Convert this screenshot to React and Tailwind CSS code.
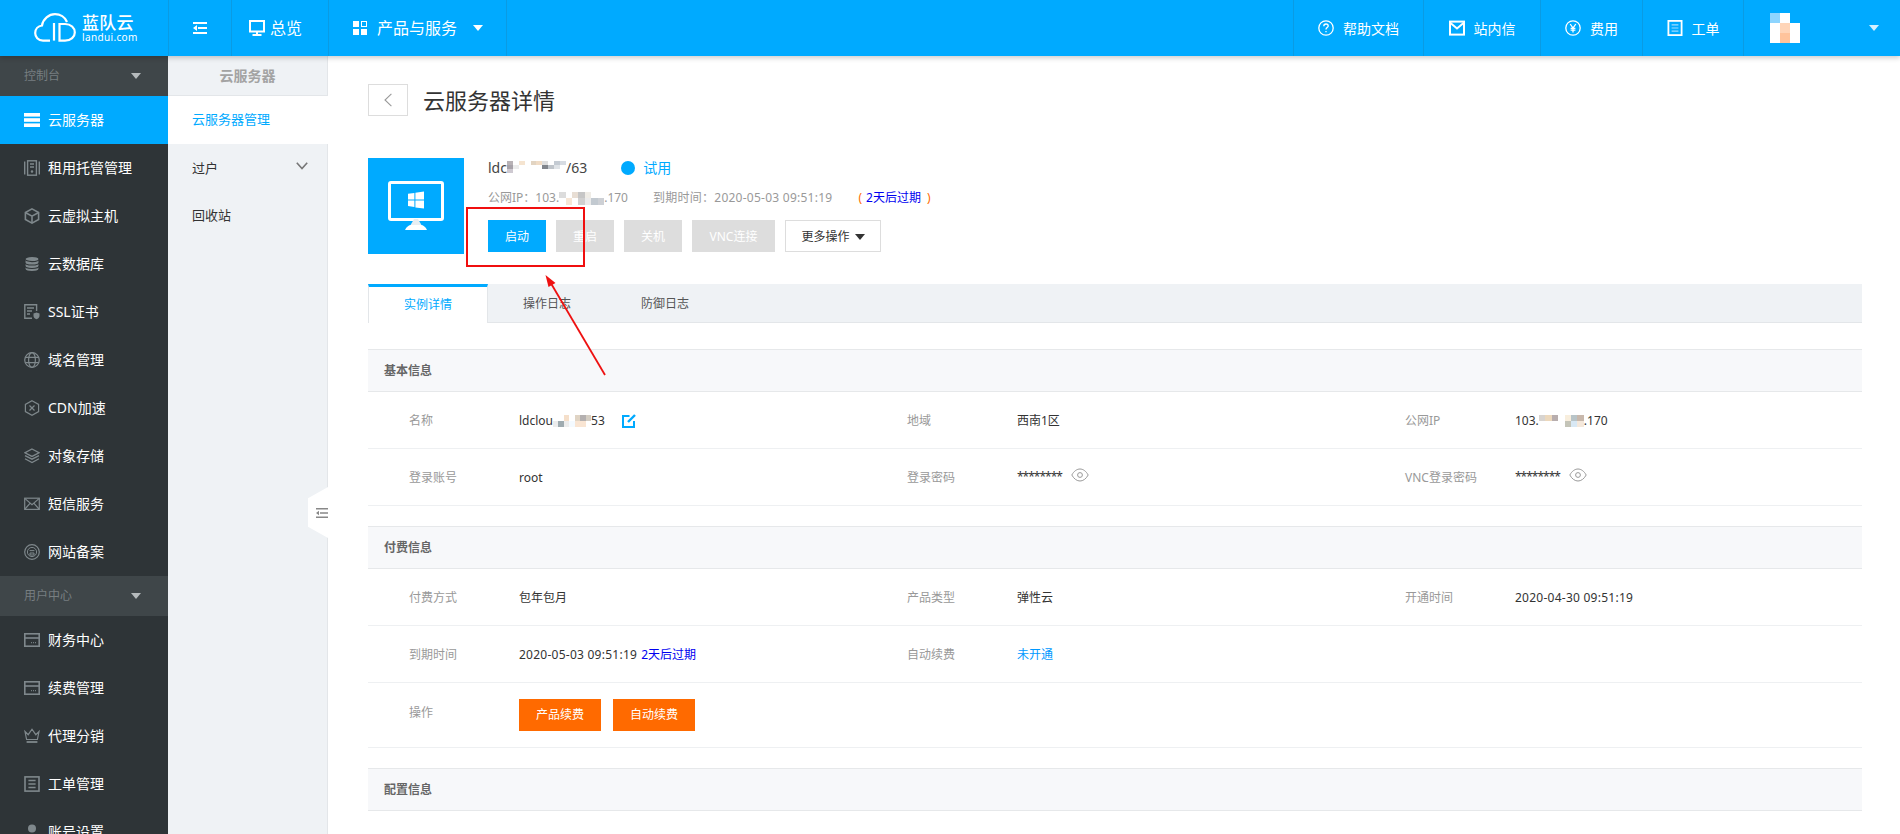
import React from "react";

const Tri = ({ cls = "border-t-white" }) => (
  <span className={`inline-block w-0 h-0 border-x-[5px] border-x-transparent border-t-[6px] ${cls}`} />
);

const I = ({ children, className = "", w = 16, h = 16, fill = "none", stroke = "#7f888c", sw = 1.4 }) => (
  <svg viewBox={`0 0 ${w} ${h}`} width={w} height={h} fill={fill} stroke={stroke} strokeWidth={sw} className={`shrink-0 ${className}`}>
    {children}
  </svg>
);

const icons = {
  server: (
    <I fill="#fff" stroke="none">
      <rect x="0" y="1" width="16" height="3.6" />
      <rect x="0" y="6.2" width="16" height="3.6" />
      <rect x="0" y="11.4" width="16" height="3.6" />
    </I>
  ),
  rack: (
    <I>
      <path d="M.7 1.5v13M15.3 1.5v13" />
      <rect x="3.6" y=".8" width="8.8" height="14.4" />
      <path d="M6 4h4M6 7h4" />
      <circle cx="8" cy="11.5" r=".6" />
    </I>
  ),
  cube: (
    <I sw="1.6">
      <path d="M8 .9l6.6 3.6v7L8 15.1 1.4 11.5v-7z" />
      <path d="M1.8 4.8L8 8.2l6.2-3.4M8 8.2v6.6" />
    </I>
  ),
  db: (
    <I fill="#7f888c" stroke="#2e3437" sw="1.1">
      <path d="M1 10.4v2.4C1 14.4 4.1 15.6 8 15.6s7-1.2 7-2.8v-2.4z" />
      <path d="M1 6.6v3.2c0 1.5 3.1 2.7 7 2.7s7-1.2 7-2.7V6.6z" />
      <path d="M1 3v3.4C1 7.9 4.1 9 8 9s7-1.1 7-2.6V3z" />
      <ellipse cx="8" cy="3" rx="7" ry="2.6" />
    </I>
  ),
  ssl: (
    <I>
      <path d="M8 14.3H.8V.8h11.8V7" />
      <path d="M3 4h7M3 7h5M3 10h3" />
      <path d="M12.5 8.4l3 1v2.6c0 1.5-1.4 2.6-3 3.2-1.6-.6-3-1.7-3-3.2V9.4z" fill="#7f888c" stroke="none" />
    </I>
  ),
  globe: (
    <I sw="1.2">
      <circle cx="8" cy="8" r="7.3" />
      <ellipse cx="8" cy="8" rx="3.4" ry="7.3" />
      <path d="M1.2 5.4h13.6M1.2 10.6h13.6" />
    </I>
  ),
  cdn: (
    <I sw="1.2">
      <path d="M8 .8l6.6 3.6v7.2L8 15.2 1.4 11.6V4.4z" />
      <path d="M5.5 5.5l5 5M10.5 5.5l-5 5" />
      <circle cx="8" cy="8" r="1.1" fill="#7f888c" stroke="none" />
    </I>
  ),
  layers: (
    <I sw="1.3">
      <path d="M8 1l7 3.8-7 3.6-7-3.6z" />
      <path d="M1 7.6l7 3.6 7-3.6M1 10.8l7 3.8 7-3.8" />
    </I>
  ),
  mail: (
    <I sw="1.2">
      <rect x=".7" y="2.2" width="14.6" height="11.2" />
      <path d="M1 2.6l7 6 7-6M1 13l5-5.6M15 13l-5-5.6" />
    </I>
  ),
  bei: (
    <I sw="1.2">
      <circle cx="8" cy="8" r="7.3" />
      <circle cx="8" cy="8" r="4.6" strokeWidth="1" />
      <path d="M5.6 6.6h4.8M6 9h4M6 9v2h4V9" strokeWidth="1" />
    </I>
  ),
  card: (
    <I sw="1.6">
      <rect x=".8" y="1.8" width="14.4" height="12.4" />
      <path d="M1 6h14" />
      <path d="M7 10.6h.9M9 10.6h.9M11 10.6h.9" strokeWidth="1.4" />
    </I>
  ),
  crown: (
    <I sw="1.2">
      <path d="M1 3.5l3.2 3.2L8 1.2l3.8 5.5L15 3.5l-1.6 8H2.6z" />
      <path d="M2.6 14h10.8" strokeWidth="1.8" />
    </I>
  ),
  ticket: (
    <I sw="1.6">
      <rect x="1" y=".9" width="14" height="14.2" />
      <path d="M4.4 4.5h7.2M4.4 8h7.2M4.4 11.5h7.2" strokeWidth="1.3" />
    </I>
  ),
  user: (
    <I fill="#7f888c" stroke="none">
      <circle cx="8" cy="4.5" r="4" />
      <path d="M1 16c0-3.6 3-6 7-6s7 2.4 7 6z" />
    </I>
  ),
};

const sideGroups = [
  { head: "控制台", items: [
    ["云服务器", "server", true], ["租用托管管理", "rack"], ["云虚拟主机", "cube"], ["云数据库", "db"], ["SSL证书", "ssl"],
    ["域名管理", "globe"], ["CDN加速", "cdn"], ["对象存储", "layers"], ["短信服务", "mail"], ["网站备案", "bei"],
  ]},
  { head: "用户中心", items: [
    ["财务中心", "card"], ["续费管理", "card"], ["代理分销", "crown"], ["工单管理", "ticket"], ["账号设置", "user"],
  ]},
];

const Sidebar = () => (
  <aside className="w-[168px] shrink-0 bg-[#2e3437] text-[14px]">
    {sideGroups.map((g) => (
      <div key={g.head}>
        <div className="h-10 bg-[#3f4649] flex items-center justify-between pl-6 pr-[27px] text-[12px] text-[#777e81]">
          <span>{g.head}</span>
          <Tri cls="border-t-[#b5babc]" />
        </div>
        {g.items.map(([label, ic, active]) => (
          <div key={label} className={`h-12 flex items-center pl-6 gap-2 ${active ? "bg-[#00aaff] text-white" : "text-white"}`}>
            {icons[ic]}
            <span className="pb-[2px]">{label}</span>
          </div>
        ))}
      </div>
    ))}
  </aside>
);

const SubNav = () => (
  <nav className="relative w-[160px] shrink-0 bg-[#eff2f5] border-r border-[#e3e6e9] text-[13px]">
    <div className="h-10 flex items-center justify-center text-[14px] font-bold text-[#a3a3a3] border-b border-[#e3e6e9]">云服务器</div>
    <div className="h-12 flex items-center pl-6 bg-white text-[#00aaff] -mr-px">云服务器管理</div>
    <div className="h-12 flex items-center justify-between pl-6 pr-[19px] text-[#333]">
      <span className="pt-[2px]">过户</span>
      <svg viewBox="0 0 12 8" width="12" height="8" fill="none" stroke="#777" strokeWidth="1.6" className="-mt-1"><path d="M.8.8L6 6.6 11.2.8" /></svg>
    </div>
    <div className="h-12 flex items-center pl-6 text-[#333]">回收站</div>
    <div className="absolute -right-px top-[431px] w-5 h-[51px] bg-white [clip-path:polygon(100%_0,100%_100%,0_78%,0_22%)] flex items-center justify-end">
      <svg viewBox="0 0 12 12" width="12" height="12"><path d="M0 1h12v1.6H0zM4 5.2h8v1.6H4zM0 9.4h12V11H0zM3 3.8v4.4L0 6z" fill="#888" /></svg>
    </div>
  </nav>
);

const TopItem = ({ icon, label, className = "" }) => (
  <div className={`flex items-center justify-center gap-[9px] border-l border-[#0a9be3] text-[14px] text-white ${className}`}>
    {icon}
    <span>{label}</span>
  </div>
);

const TopBar = () => (
  <header className="relative z-20 h-14 shrink-0 flex items-stretch bg-[#00aaff] text-white shadow-[0_2px_5px_rgba(0,0,0,0.2)]">
    <div className="w-[168px] shrink-0 flex items-center pl-[34px] gap-[6px] pb-px">
      <svg viewBox="0 0 42 29" width="42" height="29" fill="none" stroke="#fff" strokeWidth="2.2">
        <path d="M16 27.6H9C4 27.6 1.2 24 1.2 20c0-4 2.8-7 6.8-7.5C9 6 15 1.2 21 1.2c5 0 10 2.8 12 7.8" />
        <path d="M20 10v17.6" />
        <path d="M25.5 27.6V11H31c6 0 9.8 4 9.8 8.4S37 27.6 31 27.6z" />
      </svg>
      <div className="flex flex-col items-start">
        <span className="text-[17px] leading-[19px] tracking-[0.2px] font-medium">蓝队云</span>
        <span className="text-[10px] leading-[10px] tracking-[0.35px]">landui.com</span>
      </div>
    </div>
    <div className="w-[63px] shrink-0 border-l border-[#0a9be3] flex items-center justify-center">
      <svg viewBox="0 0 14 12" width="14" height="12"><path d="M0 0h14v2H0zM5 5h9v2H5zM0 10h14v2H0zM4 3v6L0 6z" fill="#fff" /></svg>
    </div>
    <div className="w-[97px] shrink-0 border-l border-[#0a9be3] flex items-center pl-[17px] gap-[5px] text-[16px]">
      <svg viewBox="0 0 16 16" width="16" height="16" fill="none" stroke="#fff" strokeWidth="2"><rect x="1" y="1" width="14" height="10.5" /><path d="M8 11.5V15M3.5 15h9" /></svg>
      <span>总览</span>
    </div>
    <div className="w-[179px] shrink-0 border-x border-[#0a9be3] flex items-center pl-[24px] text-[16px]">
      <svg viewBox="0 0 14 14" width="14" height="14" fill="#fff" className="mr-[10px]"><rect width="6" height="6" /><rect x="8.5" y=".5" width="5" height="5" fill="none" stroke="#fff" strokeWidth="1" /><rect y="8" width="6" height="6" /><rect x="8" y="8" width="6" height="6" /></svg>
      <span>产品与服务</span>
      <Tri cls="border-t-white ml-4" />
    </div>
    <div className="flex-1" />
    <TopItem className="w-[130px]" label="帮助文档" icon={
      <svg viewBox="0 0 16 16" width="16" height="16" fill="none" stroke="#fff" strokeWidth="1.3"><circle cx="8" cy="8" r="7.2" /><path d="M5.8 6.2C5.8 4.8 6.8 4 8 4s2.2.8 2.2 2c0 1.6-2.2 1.6-2.2 3.4" /><path d="M8 11v1.2" /></svg>} />
    <TopItem className="w-[117px]" label="站内信" icon={
      <svg viewBox="0 0 16 16" width="16" height="16" fill="none" stroke="#fff" strokeWidth="2"><rect x="1" y="1.6" width="14" height="13" /><path d="M1.5 3l6.5 5.5L14.5 3" /></svg>} />
    <TopItem className="w-[102px]" label="费用" icon={
      <svg viewBox="0 0 16 16" width="16" height="16" fill="none" stroke="#fff" strokeWidth="1.3"><circle cx="8" cy="8" r="7.2" /><path d="M5.2 4L8 8l2.8-4M8 8v4.4M5.6 8.4h4.8M5.6 10.2h4.8" /></svg>} />
    <TopItem className="w-[101px]" label="工单" icon={
      <svg viewBox="0 0 16 16" width="16" height="16" fill="none" stroke="#fff" strokeWidth="1.8"><rect x="1.4" y=".9" width="13.2" height="14.2" /><path d="M4.6 4.8h6.8M4.6 8h6.8M4.6 11.2h6.8" strokeWidth="1.2" stroke="#9fdcff" /></svg>} />
    <div className="w-[157px] border-l border-[#0a9be3] flex items-center justify-between pl-[26px] pr-[21px]">
      <div className="grid grid-cols-3 w-[30px]">
        <span className="h-[10px] bg-[#8dd5ff]" /><span className="h-[10px] bg-white" /><span className="h-[10px]" />
        <span className="h-[10px] bg-white" /><span className="h-[10px] bg-[#ffd5b8]" /><span className="h-[10px] bg-white" />
        <span className="h-[10px] bg-white" /><span className="h-[10px] bg-[#ffc39b]" /><span className="h-[10px] bg-white" />
      </div>
      <Tri cls="border-t-[#d5f0ff]" />
    </div>
  </header>
);

const Mosaic = ({ rows, w, h, className = "" }) => (
  <span className={`inline-flex flex-col align-middle ${className}`} style={{ width: w, height: h }}>
    {rows.map((r, i) => (
      <span key={i} className="flex flex-1">
        {r.map((c, j) => <span key={j} className="flex-1" style={{ backgroundColor: c }} />)}
      </span>
    ))}
  </span>
);

const Eye = () => (
  <svg viewBox="0 0 18 14" width="18" height="14" fill="none" stroke="#999" strokeWidth="1" className="ml-[9px]">
    <path d="M.8 7C3 3 6 1 9 1s6 2 8.2 6C15 11 12 13 9 13S3 11 .8 7z" />
    <circle cx="9" cy="7" r="2.4" />
  </svg>
);

const Cell = ({ label, children }) => (
  <div className="flex items-center h-14 pt-[2px]">
    <span className="w-[151px] pl-[41px] shrink-0 text-[#999]">{label}</span>
    <div className="flex items-center text-[#333]">{children}</div>
  </div>
);

const Row = ({ children, className = "" }) => (
  <div className={`grid grid-cols-3 border-b border-[#eef0f2] ${className}`}>{children}</div>
);

const SectionHead = ({ children }) => (
  <div className="h-[43px] bg-[#f7f8fa] border-y border-[#e6e8ea] flex items-center pl-4 pt-px font-bold text-[#666]">{children}</div>
);

const time = "tracking-[0.25px]";

const Stars = () => (
  <>
    <span className="-mt-[3px] tracking-[-1px]">********</span>
    <span className="-mt-[6px]"><Eye /></span>
  </>
);

const Main = () => (
  <main className="relative flex-1 min-w-0 bg-white pl-10 pr-[38px] pt-7 text-[12px]">
    <div className="flex items-center h-8">
      <div className="w-10 h-8 border border-[#ddd] flex items-center justify-center">
        <svg viewBox="0 0 8 14" width="8" height="14" fill="none" stroke="#999" strokeWidth="1.1"><path d="M7.4.8L1 7l6.4 6.2" /></svg>
      </div>
      <h1 className="ml-[15px] text-[22px] font-normal text-[#333]">云服务器详情</h1>
    </div>

    <div className="flex mt-[42px]">
      <div className="w-24 h-24 bg-[#00aaff] flex items-center justify-center shrink-0">
        <svg viewBox="0 0 56 50" width="56" height="50">
          <rect x="1.5" y="1.5" width="53" height="37" rx="1.5" fill="#00aaff" stroke="#fff" strokeWidth="3" />
          <path d="M22 45l4-7h4l4 7z" fill="#e8eef2" /><path d="M17 50c1-3 4-5 6-5h10c2 0 5 2 6 5z" fill="#fff" transform="translate(0 -1)" />
          <path d="M20 12.8l6.4-.9v6.5H20zM27.4 11.7l8.6-1.2v7.9h-8.6zM20 19.6h6.4V26L20 25.1zM27.4 19.6H36v8l-8.6-1.2z" fill="#fff" />
        </svg>
      </div>
      <div className="ml-6">
        <div className="flex items-center h-5 -mt-px text-[14px] text-[#444]">
          <span>ldc</span>
          <Mosaic w={59} h={13} rows={[
            ["#b8b2b6","#fff","#f5e4d0","#fff","#e2d4c2","#f0dcc6","#dedede","#fff","#c4cbd3","#d6dbe2"],
            ["#a8a3aa","#ececec","#fff","#fff","#fff","#fff","#81858c","#bfc4ca","#dfe3e7","#fff"],
            ["#cec9d1","#fff","#fff","#fff","#fff","#fff","#fff","#fff","#fff","#fff"],
          ]} />
          <span>/63</span>
          <span className="ml-[34px] mt-[2px] w-[14px] h-[14px] rounded-full bg-[#00aaff]" />
          <span className="ml-2 text-[#00aaff]">试用</span>
        </div>
        <div className="flex items-center h-[14px] mt-[14px] text-[#999]">
          <span>公网IP{"\uFF1A"}</span><span>103.</span>
          <Mosaic w={45} h={13} rows={[
            ["#dcdcdc","#fff","#e8ded4","#c6c6c6","#efece6","#fff","#fff"],
            ["#fff","#f6e6d6","#fff","#d0d0d0","#ebebeb","#c2c9d0","#cdd0d5"],
          ]} />
          <span>.170</span>
          <span className={`ml-[25px] ${time}`}>到期时间{"\uFF1A"}2020-05-03 09:51:19</span>
          <span className="ml-[26px] text-[#ff6a00]">(</span>
          <span className="ml-[4px] text-[#0000f0]">2天后过期</span>
          <span className="ml-[6px] text-[#ff6a00]">)</span>
        </div>
        <div className="flex gap-[10px] mt-[15px]">
          <button className="w-[58px] h-8 pt-px bg-[#00aaff] text-white">启动</button>
          <button className="w-[58px] h-8 pt-px bg-[#ddd] text-white">重启</button>
          <button className="w-[58px] h-8 pt-px bg-[#ddd] text-white">关机</button>
          <button className="w-[83px] h-8 pt-px bg-[#ddd] text-white">VNC连接</button>
          <button className="w-[96px] h-8 pt-px border border-[#ddd] text-[#333] flex items-center justify-center gap-[5px]">更多操作<Tri cls="border-t-[#333]" /></button>
        </div>
      </div>
    </div>

    <div className="flex h-[39px] mt-[30px] bg-[#eff2f5] border-b border-[#e3e6e9] text-[#555]">
      <div className="w-[120px] h-[39px] bg-white border-t-[3px] border-x border-t-[#00aaff] border-x-[#e3e6e9] flex items-center justify-center text-[#00aaff]">实例详情</div>
      <div className="w-[118px] flex items-center justify-center pt-[2px]">操作日志</div>
      <div className="w-[118px] flex items-center justify-center pt-[2px]">防御日志</div>
    </div>

    <div className="mt-[26px]">
      <SectionHead>基本信息</SectionHead>
      <Row>
        <Cell label="名称">
          <span>ldclou</span>
          <Mosaic w={38} h={12} rows={[
            ["#fff","#fff","#f5dfca","#fff","#e0d4c4","#b4b0b0","#d4cdc2"],
            ["#ececec","#9fabb0","#ececec","#f4faff","#f9e5d3","#f9e5d3","#fff"],
          ]} />
          <span>53</span>
          <svg viewBox="0 0 14 14" width="14" height="14" fill="none" stroke="#00aaff" strokeWidth="2" className="ml-[17px]"><path d="M7.5 2H1v11h11V7" /><path d="M13 1L6 8" strokeWidth="2.4" /></svg>
        </Cell>
        <Cell label="地域">西南1区</Cell>
        <Cell label="公网IP">
          <span>103.</span>
          <Mosaic w={45} h={12} rows={[
            ["#d8d4d0","#ecd8bc","#b8aeae","#fff","#f8eedd","#b8c4c8","#c8b8ac"],
            ["#fff","#fff","#fff","#fff","#c4c4b8","#d8e8f4","#f4e8dc"],
          ]} />
          <span>.170</span>
        </Cell>
      </Row>
      <Row>
        <Cell label="登录账号">root</Cell>
        <Cell label="登录密码"><Stars /></Cell>
        <Cell label="VNC登录密码"><Stars /></Cell>
      </Row>
    </div>

    <div className="mt-5">
      <SectionHead>付费信息</SectionHead>
      <Row>
        <Cell label="付费方式">包年包月</Cell>
        <Cell label="产品类型">弹性云</Cell>
        <Cell label="开通时间"><span className={time}>2020-04-30 09:51:19</span></Cell>
      </Row>
      <Row>
        <Cell label="到期时间"><span className={time}>2020-05-03 09:51:19</span><span className="ml-1 text-[#0000f0]">2天后过期</span></Cell>
        <Cell label="自动续费"><span className="text-[#0099ff]">未开通</span></Cell>
        <div />
      </Row>
      <div className="flex items-start h-[65px] border-b border-[#eef0f2]">
        <span className="w-[151px] pl-[41px] shrink-0 leading-[60px] text-[#999]">操作</span>
        <div className="flex gap-3 pt-4">
          <button className="w-[82px] h-8 bg-[#ff6a00] text-white">产品续费</button>
          <button className="w-[82px] h-8 bg-[#ff6a00] text-white">自动续费</button>
        </div>
      </div>
    </div>

    <div className="mt-5">
      <SectionHead>配置信息</SectionHead>
    </div>

    <div className="absolute left-[138px] top-[151px] w-[119px] h-[60px] border-2 border-[#f00f0f]" />
    <svg className="absolute left-[210px] top-[214px]" width="72" height="110" viewBox="0 0 72 110" fill="none">
      <path d="M67 105L11 10" stroke="#ee1111" strokeWidth="1.8" />
      <path d="M7.5 5l3 12 7-4z" fill="#ee1111" />
    </svg>
  </main>
);

export default function App() {
  return (
    <div className="h-[834px] w-[1900px] overflow-hidden flex flex-col bg-white font-['Noto_Sans','Noto_Sans_CJK_SC',sans-serif]">
      <TopBar />
      <div className="flex flex-1 min-h-0">
        <Sidebar />
        <SubNav />
        <Main />
      </div>
    </div>
  );
}
